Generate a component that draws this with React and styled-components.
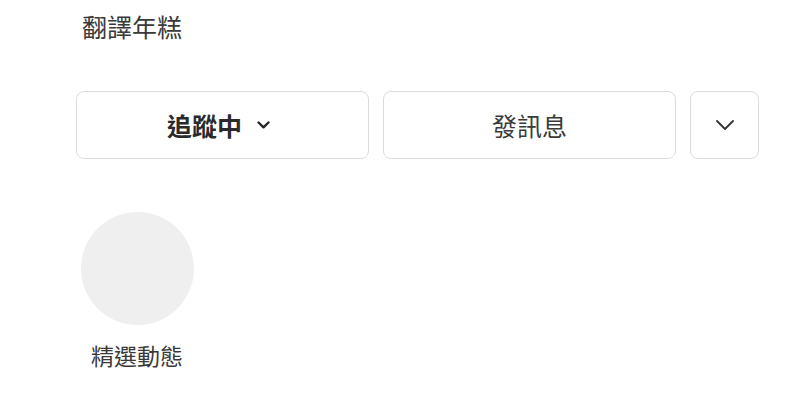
import React from "react";
import styled, { createGlobalStyle } from "styled-components";

const Global = createGlobalStyle`
  html, body { margin: 0; padding: 0; background: #ffffff; }
  body { font-family: "Noto Sans CJK TC", "Noto Sans", sans-serif; color: #262626; }
`;

const Page = styled.div`
  width: 800px;
  height: 411px;
  box-sizing: border-box;
  padding: 8px 41px 0 76px;
  display: flex;
  flex-direction: column;
`;

const Title = styled.h1`
  margin: 0 0 0 6px;
  font-size: 25px;
  line-height: 36px;
  font-weight: 400;
  color: #3a3a3a;
`;

const Actions = styled.div`
  margin-top: 47px;
  display: flex;
  gap: 14px;
`;

const Button = styled.button`
  flex: ${(p) => (p.$square ? "0 0 69px" : "0 0 293px")};
  height: 68px;
  box-sizing: border-box;
  border: 1.5px solid #dcdcdc;
  border-radius: 8px;
  background: #ffffff;
  display: flex;
  align-items: center;
  justify-content: center;
  gap: 15px;
  font-family: inherit;
  font-size: 25px;
  font-weight: ${(p) => (p.$bold ? 700 : 400)};
  color: ${(p) => (p.$bold ? "#2a2a2a" : "#3a3a3a")};
  padding: 0 ${(p) => (p.$bold ? "8px" : "0")} 0 0;
  cursor: pointer;
`;

const Highlights = styled.div`
  margin-top: 53px;
  display: flex;
`;

const Highlight = styled.div`
  width: 122px;
  display: flex;
  flex-direction: column;
  align-items: center;
`;

const Circle = styled.div`
  width: 113px;
  height: 113px;
  border-radius: 50%;
  background: #efefef;
`;

const Label = styled.div`
  margin-top: 14px;
  font-size: 23px;
  line-height: 32px;
  color: #3a3a3a;
`;

const Chevron = ({ size, stroke, w }) => (
  <svg width={w} height={size} viewBox="0 0 18 10" fill="none">
    <path d="M1 1 L9 9 L17 1" stroke={stroke} strokeWidth="1.8" strokeLinecap="round" strokeLinejoin="round" />
  </svg>
);

export default function App() {
  return (
    <>
      <Global />
      <Page>
        <Title>翻譯年糕</Title>
        <Actions>
          <Button $bold>
            追蹤中
            <svg width="13" height="8" viewBox="0 0 13 8" fill="none">
              <path d="M1.5 1.5 L6.5 6.3 L11.5 1.5" stroke="#262626" strokeWidth="2.4" strokeLinecap="round" strokeLinejoin="round" />
            </svg>
          </Button>
          <Button>發訊息</Button>
          <Button $square>
            <Chevron size={10} w={18} stroke="#333" />
          </Button>
        </Actions>
        <Highlights>
          <Highlight>
            <Circle />
            <Label>精選動態</Label>
          </Highlight>
        </Highlights>
      </Page>
    </>
  );
}
